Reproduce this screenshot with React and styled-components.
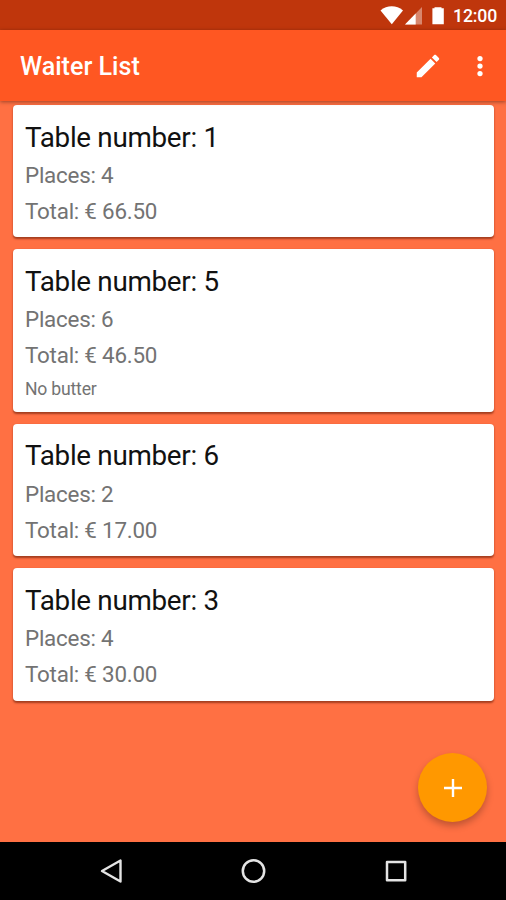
import React from 'react'
import styled, { createGlobalStyle } from 'styled-components'

const GlobalStyle = createGlobalStyle`
  * {
    box-sizing: border-box;
  }

  body {
    margin: 0;
    background: #ff7043;
    font-family: Roboto, sans-serif;
  }
`;

const Screen = styled.div`
  width: 100%;
  height: 100vh;
  display: flex;
  flex-direction: column;
  overflow: hidden;
  position: relative;
  background: #ff7043;
`;

const StatusBar = styled.div`
  flex: none;
  height: 30px;
  padding-right: 9px;
  display: flex;
  align-items: center;
  justify-content: flex-end;
  background: #bf360c;
  color: #fff;

  svg {
    display: block;
  }
`;

const Clock = styled.span`
  margin-left: 7px;
  font-size: 17.7px;
  font-weight: 500;
  line-height: 30px;
  letter-spacing: -0.2px;
  padding-top: 2px;
`;

const Toolbar = styled.header`
  flex: none;
  height: 71px;
  padding: 0 6.5px 0 20px;
  display: flex;
  align-items: center;
  background: #ff5722;
  color: #fff;
  box-shadow: 0 1px 4px rgba(0, 0, 0, 0.4);
  z-index: 1;
`;

const Title = styled.h1`
  flex: 1;
  margin: 0;
  padding-top: 1px;
  font-size: 25.1px;
  font-weight: 500;
`;

const IconButton = styled.button`
  width: ${props => props.$width}px;
  height: 48px;
  padding: 0;
  border: 0;
  display: flex;
  align-items: center;
  justify-content: center;
  background: none;
  color: inherit;
`;

const List = styled.main`
  flex: 1;
  min-height: 0;
  padding: 4px 12px 0 13px;
  display: flex;
  flex-direction: column;
  gap: 12px;
`;

const Card = styled.article`
  padding: 15.5px 12px 7.9px;
  border-radius: 4px;
  background: #fff;
  box-shadow: 0 1.5px 2px rgba(90, 20, 0, 0.55);
`;

const CardTitle = styled.h2`
  margin: 0 0 4.6px;
  font-size: 27.8px;
  font-weight: 400;
  line-height: 33px;
  letter-spacing: -0.3px;
  color: #111;
`;

const Detail = styled.p`
  margin: 0;
  font-size: 22.4px;
  line-height: 35.7px;
  letter-spacing: -0.23px;
  color: #737373;
`;

const Note = styled.p`
  margin: 0;
  font-size: 17.6px;
  line-height: 30px;
  letter-spacing: -0.2px;
  color: #737373;
`;

const AddButton = styled.button`
  position: absolute;
  right: 19px;
  bottom: 78px;
  width: 69px;
  height: 69px;
  padding: 0;
  border: 0;
  border-radius: 50%;
  display: flex;
  align-items: center;
  justify-content: center;
  background: #ff9800;
  color: #fff;
  box-shadow: 0 4px 7px rgba(0, 0, 0, 0.25);
`;

const NavBar = styled.nav`
  flex: none;
  height: 58px;
  padding: 0 39px 0 41px;
  display: flex;
  justify-content: space-between;
  background: #000;
`;

const NavButton = styled.button`
  width: 142px;
  padding: 0;
  border: 0;
  display: flex;
  align-items: center;
  justify-content: center;
  background: none;
`;

const tables = [
  { number: 1, places: 4, total: '66.50' },
  { number: 5, places: 6, total: '46.50', note: 'No butter' },
  { number: 6, places: 2, total: '17.00' },
  { number: 3, places: 4, total: '30.00' },
]

const StatusIcons = () => (
  <svg width="66" height="30" viewBox="0 0 66 30" fill="#fff">
    <path d="M0.5 10.4C7 5 16.5 5 23 10.4L11.8 24.3Z" />
    <path d="M42 7V24.5H25Z" opacity="0.4" />
    <path d="M35.7 13.5V24.5H25Z" />
    <path d="M54.5 7.2H61.5V8.2H63.8V24.3H52.4V8.2H54.5Z" />
  </svg>
)

const PencilIcon = () => (
  <svg width="30" height="30" viewBox="0 0 24 24" fill="currentColor">
    <path d="M3 17.25V21h3.75L17.81 9.94l-3.75-3.75L3 17.25zM20.71 7.04c.39-.39.39-1.02 0-1.41l-2.34-2.34c-.39-.39-1.02-.39-1.41 0l-1.83 1.83 3.75 3.75 1.83-1.83z" />
  </svg>
)

const MoreIcon = () => (
  <svg width="30" height="30" viewBox="0 0 24 24" fill="currentColor">
    <circle cx="12" cy="6" r="2.1" />
    <circle cx="12" cy="12" r="2.1" />
    <circle cx="12" cy="18" r="2.1" />
  </svg>
)

const TableCard = ({ table }) => (
  <Card>
    <CardTitle>Table number: {table.number}</CardTitle>
    <Detail>Places: {table.places}</Detail>
    <Detail>Total: € {table.total}</Detail>
    {table.note && <Note>{table.note}</Note>}
  </Card>
)

const App = () => {
  return (
    <>
      <GlobalStyle />
      <Screen>
        <StatusBar>
          <StatusIcons />
          <Clock>12:00</Clock>
        </StatusBar>
        <Toolbar>
          <Title>Waiter List</Title>
          <IconButton $width={64} aria-label="Edit">
            <PencilIcon />
          </IconButton>
          <IconButton $width={40} aria-label="More options">
            <MoreIcon />
          </IconButton>
        </Toolbar>
        <List>
          {tables.map(table => (
            <TableCard key={table.number} table={table} />
          ))}
        </List>
        <AddButton aria-label="Add table">
          <svg width="20" height="20" viewBox="0 0 20 20" fill="none" stroke="currentColor" strokeWidth="2.4">
            <path d="M10 1V19M1 10H19" />
          </svg>
        </AddButton>
        <NavBar>
          <NavButton aria-label="Back">
            <svg width="26" height="26" viewBox="0 0 26 26" fill="none" stroke="#e4e4e4" strokeWidth="2.4" strokeLinejoin="round">
              <path d="M21.5 2.5V23.5L3 13Z" />
            </svg>
          </NavButton>
          <NavButton aria-label="Home">
            <svg width="26" height="26" viewBox="0 0 26 26" fill="none" stroke="#e4e4e4" strokeWidth="2.5">
              <circle cx="12.5" cy="13" r="10.7" />
            </svg>
          </NavButton>
          <NavButton aria-label="Overview">
            <svg width="26" height="26" viewBox="0 0 26 26" fill="none" stroke="#e4e4e4" strokeWidth="2.5" strokeLinejoin="round">
              <rect x="4" y="4" width="18.2" height="18.2" />
            </svg>
          </NavButton>
        </NavBar>
      </Screen>
    </>
  )
}

export default App
